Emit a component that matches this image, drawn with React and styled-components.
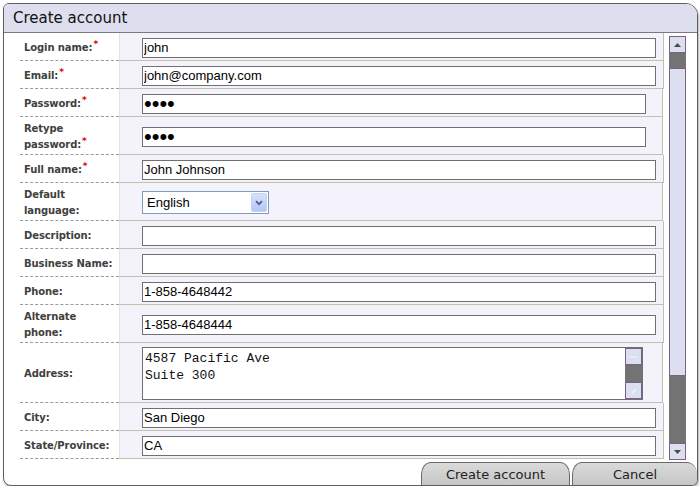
import React from "react";
import styled, { createGlobalStyle } from "styled-components";

const GlobalStyle = createGlobalStyle`
  html, body { margin: 0; padding: 0; background: #fff; }
  body { font-family: "DejaVu Sans", Verdana, sans-serif; }
`;

const Window = styled.div`
  box-sizing: border-box;
  width: 695px;
  height: 483px;
  margin: 3px 0 0 3px;
  border: 1px solid #5e5e5e;
  border-radius: 6px 12px 7px 8px;
  overflow: hidden;
  background: #fff;
  box-shadow: 1px 2px 2px rgba(0, 0, 0, 0.3);
  display: flex;
  flex-direction: column;
`;

const Header = styled.div`
  flex: none;
  height: 28px;
  background: #dedfee;
  border-bottom: 1px solid #7a7a7a;
  padding-left: 9px;
  display: flex;
  align-items: center;
  font-size: 15px;
  color: #111;
`;

const Body = styled.div`
  flex: none;
  height: 427px;
  display: flex;
`;

const Form = styled.div`
  flex: none;
  width: 643px;
  padding-left: 16px;
`;

const Row = styled.div`
  display: flex;
  min-height: 28px;
`;

const Label = styled.div`
  box-sizing: border-box;
  flex: none;
  width: 99px;
  padding: 4px 0 1px 4px;
  border-bottom: 1px dashed #9a9a9a;
  display: flex;
  align-items: center;
  font-size: 10px;
  font-weight: bold;
  letter-spacing: -0.1px;
  line-height: 16px;
  color: #404040;
  white-space: nowrap;
`;

const Req = styled.span`
  color: #e00000;
  font-size: 9px;
  line-height: 0;
  vertical-align: 4px;
  margin-left: 1px;
`;

const Value = styled.div`
  box-sizing: border-box;
  flex: 1;
  padding: 4px 7px 2px 22px;
  background: #f4f3fc;
  border-left: 1px solid #e6e3d8;
  border-right: 1px solid #c2bfae;
  border-bottom: 1px solid #c2bfae;
  display: flex;
  align-items: center;
`;

const TextInput = styled.input`
  box-sizing: border-box;
  width: ${(p) => p.$w}px;
  height: 20px;
  margin: 0;
  padding: 0 1px;
  border: 1px solid #707070;
  background: #fff;
  color: #000;
  font-family: "Liberation Sans", Arial, sans-serif;
  font-size: ${(p) => (p.type === "password" ? 22 : 13)}px;
  outline: none;
`;

const SelectBox = styled.div`
  box-sizing: border-box;
  width: 127px;
  height: 23px;
  padding: 1px;
  border: 1px solid #7f9db9;
  background: #fff;
  display: flex;
`;

const Select = styled.select`
  appearance: none;
  flex: 1;
  min-width: 0;
  margin: 0;
  padding: 0 0 0 3px;
  border: none;
  background: transparent;
  font: 13px "Liberation Sans", Arial, sans-serif;
  color: #000;
  outline: none;
`;

const DropBtn = styled.span`
  box-sizing: border-box;
  width: 16px;
  border: 1px solid #c3d1f3;
  border-radius: 2px;
  background: linear-gradient(#d6e1fc, #b4c6f2);
  display: flex;
  align-items: center;
  justify-content: center;
`;

const AreaBox = styled.div`
  box-sizing: border-box;
  width: 501px;
  height: 53px;
  border: 1px solid #707070;
  background: #fff;
  display: flex;
`;

const Area = styled.textarea`
  flex: 1;
  margin: 0;
  padding: 2px 2px;
  border: none;
  resize: none;
  outline: none;
  overflow: hidden;
  font: 13px "Liberation Mono", "Courier New", monospace;
  line-height: 17px;
  color: #111;
`;

const MiniBar = styled.div`
  flex: none;
  width: 17px;
  background: #737373;
  display: flex;
  flex-direction: column;
  justify-content: space-between;
`;

const BarBtn = styled.div`
  box-sizing: border-box;
  flex: none;
  width: 17px;
  height: 17px;
  border: 1px solid #7d5f8c;
  background: #dcdff0;
  display: flex;
  align-items: center;
  justify-content: center;
  ${(p) => p.$end && "margin-top: auto;"}
`;

const ScrollTrack = styled.div`
  flex: none;
  width: 17px;
  height: 424px;
  margin: 3px 0 0 6px;
  background: #737373;
  display: flex;
  flex-direction: column;
`;

const Thumb = styled.div`
  box-sizing: border-box;
  height: 308px;
  margin-top: 15px;
  border: 1px solid #7d5f8c;
  background: #dcdff0;
`;

const Footer = styled.div`
  flex: 1;
  display: flex;
  justify-content: flex-end;
  align-items: flex-end;
  gap: 2px;
`;

const TabButton = styled.button`
  box-sizing: border-box;
  width: ${(p) => p.$w}px;
  height: 23px;
  margin: 0;
  padding: 0;
  border: 1px solid #6a6a6a;
  border-bottom: none;
  ${(p) => p.$last && "border-right: none;"}
  border-radius: 10px 10px 0 0 / 12px 12px 0 0;
  background: linear-gradient(#dadada, #c6c6c6);
  font: 13px "DejaVu Sans", Verdana, sans-serif;
  color: #222;
`;

const Arrow = ({ down, color = "#4a4a4a" }) => (
  <svg width="7" height="4" viewBox="0 0 7 4">
    <path d={down ? "M0 0H7L3.5 4Z" : "M0 4H7L3.5 0Z"} fill={color} />
  </svg>
);

const Chevron = () => (
  <svg width="8" height="6" viewBox="0 0 8 6">
    <path d="M1 1.2L4 4.2L7 1.2" fill="none" stroke="#4d6185" strokeWidth="1.8" />
  </svg>
);

const fields = [
  { label: ["Login name:"], req: true, value: "john", w: 514 },
  { label: ["Email:"], req: true, value: "john@company.com", w: 514 },
  { label: ["Password:"], req: true, value: "john", w: 504, type: "password" },
  { label: ["Retype", "password:"], req: true, value: "john", w: 504, type: "password" },
  { label: ["Full name:"], req: true, value: "John Johnson", w: 514 },
  { label: ["Default", "language:"], kind: "select" },
  { label: ["Description:"], value: "", w: 514 },
  { label: ["Business Name:"], value: "", w: 514 },
  { label: ["Phone:"], value: "1-858-4648442", w: 514 },
  { label: ["Alternate", "phone:"], value: "1-858-4648444", w: 514 },
  { label: ["Address:"], kind: "area" },
  { label: ["City:"], value: "San Diego", w: 514 },
  { label: ["State/Province:"], value: "CA", w: 514 },
];

const FieldControl = ({ field }) => {
  if (field.kind === "select") {
    return (
      <SelectBox>
        <Select defaultValue="en">
          <option value="en">English</option>
        </Select>
        <DropBtn>
          <Chevron />
        </DropBtn>
      </SelectBox>
    );
  }
  if (field.kind === "area") {
    return (
      <AreaBox>
        <Area defaultValue={"4587 Pacific Ave\nSuite 300"} />
        <MiniBar>
          <BarBtn>
            <svg width="8" height="2" viewBox="0 0 8 2">
              <path d="M0 1H8" stroke="#f4f4fb" strokeWidth="1" />
            </svg>
          </BarBtn>
          <BarBtn $end>
            <svg width="6" height="6" viewBox="0 0 6 6">
              <path d="M1 5L5 1" stroke="#f4f4fb" strokeWidth="1.2" />
            </svg>
          </BarBtn>
        </MiniBar>
      </AreaBox>
    );
  }
  return <TextInput type={field.type || "text"} defaultValue={field.value} $w={field.w} />;
};

export default function App() {
  return (
    <>
      <GlobalStyle />
      <Window>
        <Header>Create account</Header>
        <Body>
          <Form>
            {fields.map((f) => (
              <Row key={f.label.join(" ")}>
                <Label>
                  <span>
                    {f.label.map((line, i) => (
                      <React.Fragment key={line}>
                        {i > 0 && <br />}
                        {line}
                      </React.Fragment>
                    ))}
                    {f.req && <Req>*</Req>}
                  </span>
                </Label>
                <Value>
                  <FieldControl field={f} />
                </Value>
              </Row>
            ))}
          </Form>
          <ScrollTrack>
            <BarBtn>
              <Arrow />
            </BarBtn>
            <Thumb />
            <BarBtn $end>
              <Arrow down />
            </BarBtn>
          </ScrollTrack>
        </Body>
        <Footer>
          <TabButton $w={149}>Create account</TabButton>
          <TabButton $w={125} $last>Cancel</TabButton>
        </Footer>
      </Window>
    </>
  );
}
